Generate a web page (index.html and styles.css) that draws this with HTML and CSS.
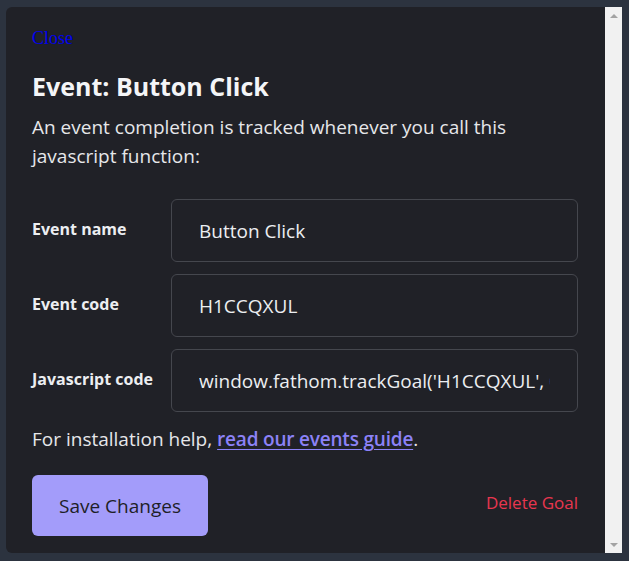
FILE: index.html
```html
<!DOCTYPE html>
<html lang="en">
<head>
<meta charset="utf-8">
<title>Event: Button Click</title>
<link rel="stylesheet" href="styles.css">
</head>
<body>
<div class="frame">
  <div class="card">
    <a class="close" href="#">Close</a>
    <h2 class="title">Event: Button Click</h2>
    <p class="intro">An event completion is tracked whenever you call this javascript function:</p>
    <div class="fields">
      <div class="row">
        <label class="label" for="name">Event name</label>
        <input class="input" id="name" type="text" value="Button Click">
      </div>
      <div class="row">
        <label class="label" for="code">Event code</label>
        <input class="input" id="code" type="text" value="H1CCQXUL" readonly>
      </div>
      <div class="row">
        <label class="label" for="js">Javascript code</label>
        <input class="input" id="js" type="text" value="window.fathom.trackGoal('H1CCQXUL', 0);" readonly>
      </div>
    </div>
    <p class="help">For installation help, <a class="guide" href="#">read our events guide</a>.</p>
    <div class="actions">
      <button class="save" type="button">Save Changes</button>
      <a class="delete" href="#">Delete Goal</a>
    </div>
  </div>
  <div class="scrollbar">
    <span class="arrow up"></span>
    <span class="arrow down"></span>
  </div>
</div>
</body>
</html>
```
FILE: styles.css
```css
html, body {
  margin: 0;
  padding: 0;
  background: #2c333f;
}
body {
  font-family: "Open Sans", "Noto Sans", sans-serif;
  width: 629px;
  height: 561px;
  overflow: hidden;
}
.frame {
  display: flex;
  padding: 7px 7px 8px 6px;
  height: 546px;
}
.card {
  flex: 1;
  background: #202127;
  border-radius: 6px 0 0 6px;
  padding: 20px 27px 0 26px;
  box-sizing: border-box;
  overflow: hidden;
}
.close {
  display: block;
  font-family: "Liberation Serif", serif;
  font-size: 18px;
  line-height: 22px;
  color: #0000ee;
  text-decoration: none;
}
.title {
  margin: 21px 0 0;
  font-size: 25px;
  line-height: 32px;
  font-weight: 700;
  color: #f4f5f7;
}
.intro {
  margin: 11px 0 0;
  font-size: 19px;
  line-height: 29px;
  color: #e6e7ea;
}
.fields {
  margin-top: 28px;
  display: flex;
  flex-direction: column;
  gap: 12px;
}
.row {
  display: flex;
  align-items: center;
}
.label {
  width: 139px;
  flex: none;
  font-size: 16px;
  font-weight: 700;
  color: #eceef1;
  margin-top: -4px;
}
.input {
  flex: 1;
  min-width: 0;
  height: 63px;
  box-sizing: border-box;
  margin: 0;
  border: 1px solid #45474e;
  border-radius: 6px;
  padding: 0 27px;
  background: transparent;
  font-family: inherit;
  font-size: 19px;
  color: #eceef1;
  outline: none;
}
.help {
  margin: 13px 0 0;
  font-size: 19px;
  line-height: 28px;
  color: #e6e7ea;
}
.guide {
  color: #8c82f7;
  font-weight: 600;
  letter-spacing: -0.2px;
  text-decoration: underline;
  text-underline-offset: 3px;
}
.actions {
  margin-top: 22px;
  display: flex;
  align-items: center;
  justify-content: space-between;
}
.save {
  width: 176px;
  height: 61px;
  border: none;
  border-radius: 6px;
  background: #a39cfa;
  color: #1e1f27;
  font-family: inherit;
  font-size: 19px;
  font-weight: 500;
}
.delete {
  color: #e8364f;
  font-size: 17px;
  text-decoration: none;
  margin-bottom: 6px;
}
.scrollbar {
  width: 17px;
  flex: none;
  background: #f1f1f1;
  display: flex;
  flex-direction: column;
  justify-content: space-between;
  align-items: center;
  padding: 7px 0 6px;
  box-sizing: border-box;
}
.arrow {
  width: 0;
  height: 0;
  border-left: 4px solid transparent;
  border-right: 4px solid transparent;
}
.arrow.up {
  border-bottom: 4px solid #a3a3a3;
}
.arrow.down {
  border-top: 4px solid #a3a3a3;
}
```
